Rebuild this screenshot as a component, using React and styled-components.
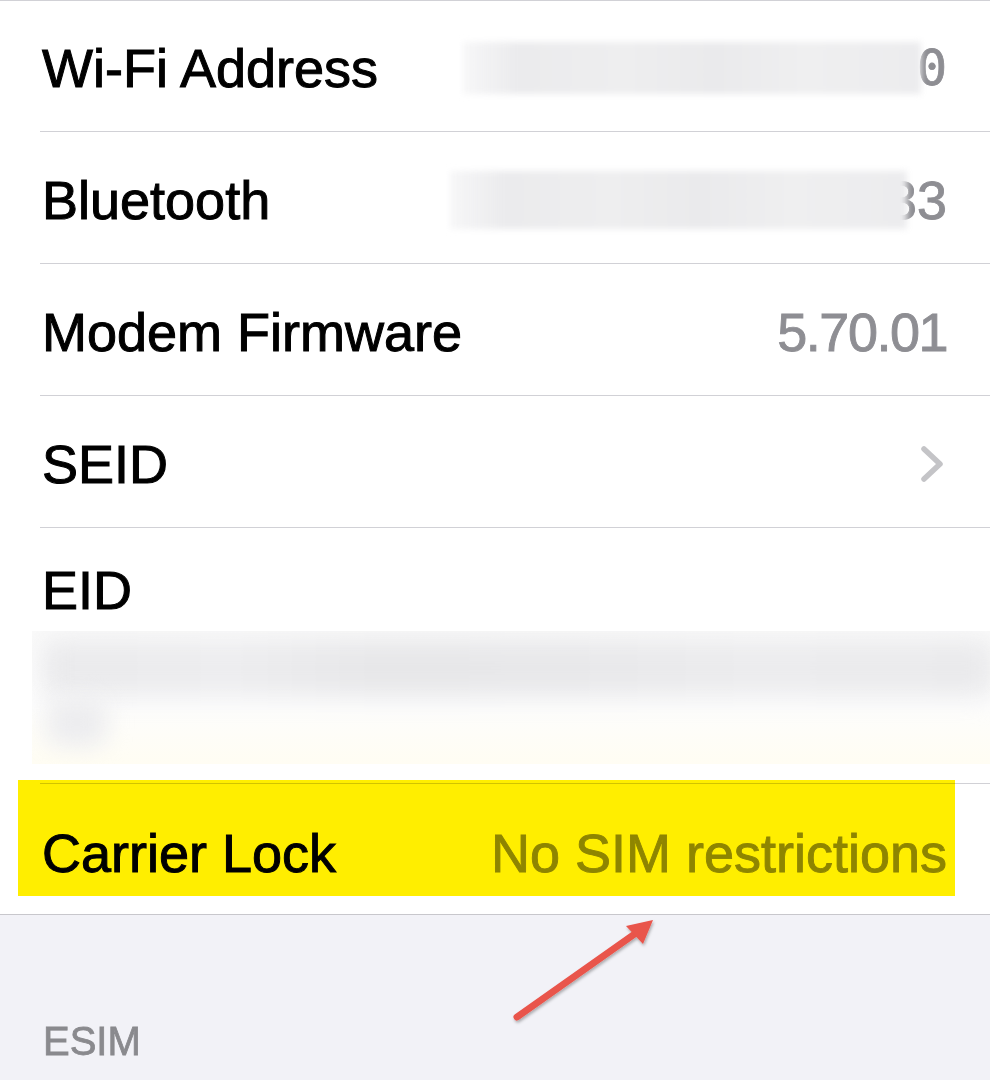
import React from "react";
import styled, { createGlobalStyle } from "styled-components";

const Global = createGlobalStyle`
  html, body { margin: 0; padding: 0; }
  body {
    background: #f2f2f7;
    font-family: "Liberation Sans", Arial, sans-serif;
    -webkit-font-smoothing: antialiased;
  }
`;

const Page = styled.div`
  position: relative;
  width: 990px;
  height: 1080px;
  overflow: hidden;
  background: #f2f2f7;
`;

const Group = styled.div`
  background: #fff;
  border-top: 1px solid #d1d1d6;
  border-bottom: 1px solid #c8c7cc;
`;

const Row = styled.div`
  position: relative;
  margin-left: 40px;
  border-bottom: ${(p) => (p.$last ? "none" : "1px solid #d1d1d6")};
`;

const RowLine = styled.div`
  display: flex;
  align-items: center;
  justify-content: space-between;
  height: ${(p) => p.$h || 131}px;
  padding: ${(p) => p.$pt ?? 4}px 43px 0 2px;
  box-sizing: border-box;
`;

const Label = styled.span`
  position: relative;
  z-index: 1;
  font-size: 54px;
  color: #000;
  -webkit-text-stroke: 1px #000;
  white-space: nowrap;
`;

const Value = styled.span`
  position: relative;
  display: flex;
  align-items: center;
  font-size: 54px;
  letter-spacing: ${(p) => (p.$tight ? "-1.5px" : "0")};
  color: #8e8e93;
  -webkit-text-stroke: 0.9px #8e8e93;
  white-space: nowrap;
`;

const MonoDigits = styled.span`
  font-family: "DejaVu Sans Mono", "Liberation Mono", monospace;
  font-size: 50px;
  -webkit-text-stroke: 0.8px #8e8e93;
`;

const BlurBox = styled.span`
  position: relative;
  z-index: 2;
  display: block;
  width: ${(p) => p.$w}px;
  height: ${(p) => p.$h}px;
  margin-right: ${(p) => p.$overlap}px;
  background: linear-gradient(
    90deg,
    rgba(246, 246, 247, 0.9) 0%,
    #ebebed 12%,
    #eeeeef 35%,
    #eaeaec 55%,
    #efeff0 75%,
    #ececee 100%
  );
  filter: blur(3px);
`;

const Chevron = styled.svg`
  width: 26px;
  height: 40px;
  margin-right: 2px;
`;

const EidBlock = styled.div`
  position: relative;
  margin: 0 -25px 0 -8px;
  height: 133px;
  background: linear-gradient(180deg, #fafafa 0%, #fdfdfd 55%, #fffdf3 100%);
  overflow: hidden;
`;

const EidBand = styled.div`
  position: absolute;
  left: 10px;
  right: 20px;
  top: 8px;
  height: 58px;
  background: linear-gradient(
    90deg,
    #eaeaec 0%,
    #ededef 20%,
    #e7e7e9 35%,
    #e8e8ea 55%,
    #ececee 75%,
    #eaeaec 100%
  );
  border-radius: 14px;
  filter: blur(12px);
`;

const EidBlob = styled.div`
  position: absolute;
  left: 14px;
  top: 66px;
  width: 62px;
  height: 50px;
  background: #ededef;
  border-radius: 18px;
  filter: blur(11px);
`;

const Highlight = styled.div`
  position: absolute;
  left: -22px;
  top: -4px;
  width: 937px;
  height: 116px;
  background: #ffee00;
  mix-blend-mode: multiply;
  z-index: 3;
  pointer-events: none;
`;

const SectionHeader = styled.div`
  padding: 106px 0 0 43px;
  font-size: 40px;
  line-height: 40px;
  color: #8a8a8e;
  -webkit-text-stroke: 0.8px #8a8a8e;
`;

const Arrow = styled.svg`
  position: absolute;
  left: 500px;
  top: 905px;
  width: 170px;
  height: 130px;
  overflow: visible;
`;

const items = [
  { label: "Wi-Fi Address", blur: { w: 458, h: 52, overlap: -4 }, tail: "0", mono: true, h: 130 },
  { label: "Bluetooth", blur: { w: 457, h: 58, overlap: -20 }, tail: "33" },
  { label: "Modem Firmware", value: "5.70.01", tight: true },
  { label: "SEID", chevron: true },
];

export default function App() {
  return (
    <Page>
      <Global />
      <Group>
        {items.map((it) => (
          <Row key={it.label}>
            <RowLine $h={it.h}>
              <Label>{it.label}</Label>
              {it.value && <Value $tight={it.tight}>{it.value}</Value>}
              {it.blur && (
                <Value>
                  <BlurBox $w={it.blur.w} $h={it.blur.h} $overlap={it.blur.overlap} />
                  {it.mono ? <MonoDigits>{it.tail}</MonoDigits> : it.tail}
                </Value>
              )}
              {it.chevron && (
                <Chevron viewBox="0 0 26 40">
                  <path
                    d="M5 5 L21 20 L5 35"
                    fill="none"
                    stroke="#c4c4c7"
                    strokeWidth="5.5"
                    strokeLinecap="round"
                    strokeLinejoin="round"
                  />
                </Chevron>
              )}
            </RowLine>
          </Row>
        ))}
        <Row>
          <RowLine $h={103} $pt={20}>
            <Label>EID</Label>
          </RowLine>
          <EidBlock>
            <EidBand />
            <EidBlob />
          </EidBlock>
          <RowLine $h={19} $pt={0} />
        </Row>
        <Row $last>
          <Highlight />
          <RowLine $h={130} $pt={8}>
            <Label>Carrier Lock</Label>
            <Value>No SIM restrictions</Value>
          </RowLine>
        </Row>
      </Group>
      <SectionHeader>ESIM</SectionHeader>
      <Arrow viewBox="500 905 170 130">
        <defs>
          <filter id="arrowShadow" x="-20%" y="-20%" width="140%" height="140%">
            <feDropShadow dx="1" dy="2" stdDeviation="1.5" floodColor="#000" floodOpacity="0.3" />
          </filter>
        </defs>
        <g filter="url(#arrowShadow)">
          <line
            x1="517"
            y1="1017"
            x2="636"
            y2="933"
            stroke="#e9544b"
            strokeWidth="7"
            strokeLinecap="round"
          />
          <polygon points="653,920 626,926 643,944" fill="#e9544b" />
        </g>
      </Arrow>
    </Page>
  );
}
